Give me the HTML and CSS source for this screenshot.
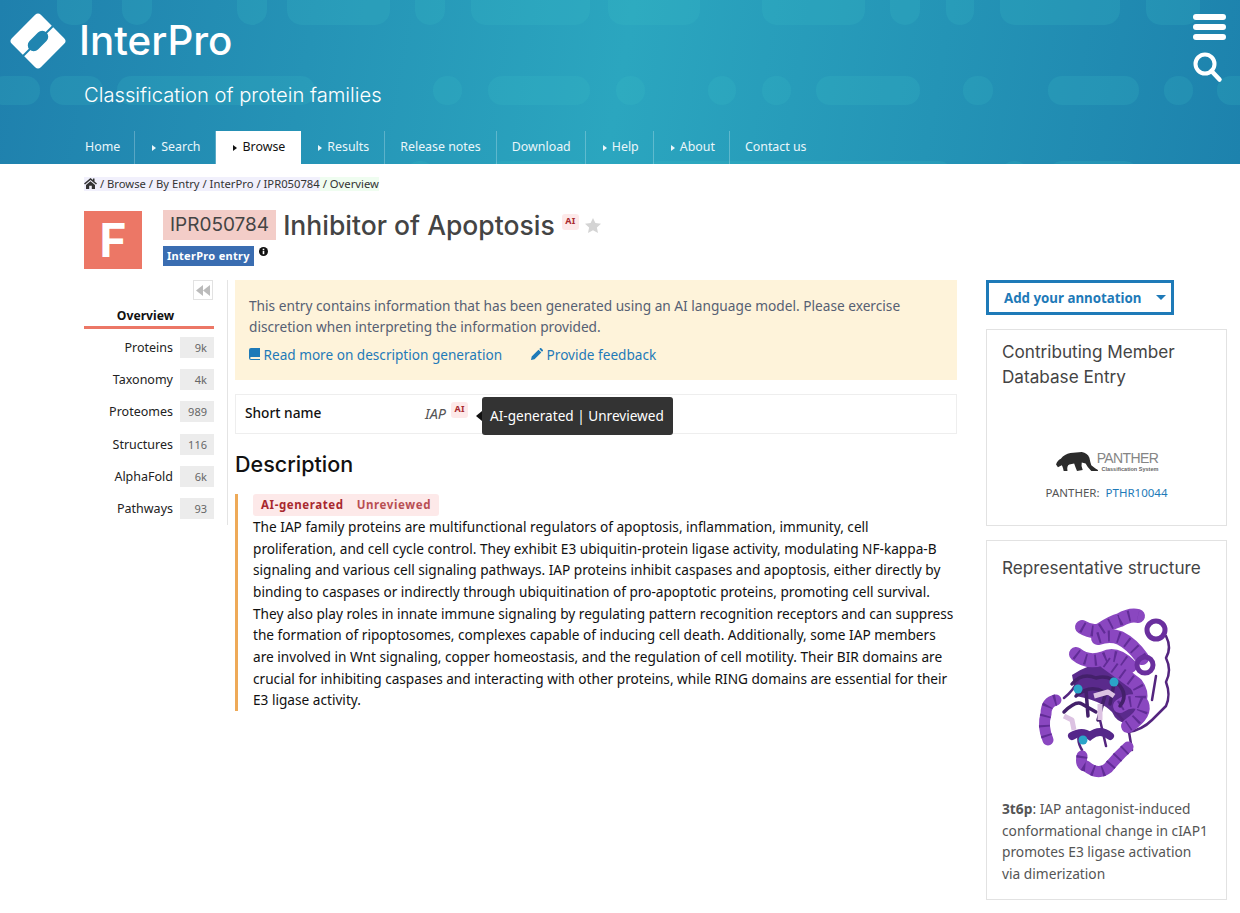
FILE: index.html
```html
<!DOCTYPE html>
<html lang="en">
<head>
    <meta charset="UTF-8">
    <title>InterPro</title>
    <link rel="stylesheet" href="styles.css">
</head>
<body>
    <header class="masthead">
        <svg class="pills" width="1240" height="164" viewBox="0 0 1240 164">
            <g class="pill-row">
                <rect x="57" y="-16" width="35" height="41" rx="15"/>
                <rect x="122" y="-16" width="30" height="41" rx="15"/>
                <rect x="237" y="-16" width="30" height="41" rx="15"/>
                <rect x="287" y="-16" width="103" height="41" rx="15"/>
                <rect x="415" y="-16" width="30" height="41" rx="15"/>
                <rect x="471" y="-16" width="119" height="41" rx="15"/>
                <rect x="608" y="-16" width="92" height="41" rx="15"/>
                <rect x="762" y="-16" width="103" height="41" rx="15"/>
                <rect x="890" y="-16" width="30" height="41" rx="15"/>
                <rect x="946" y="-16" width="28" height="41" rx="14"/>
                <rect x="1000" y="-16" width="120" height="41" rx="15"/>
                <rect x="1146" y="-16" width="54" height="41" rx="15"/>
                <rect x="-10" y="76" width="50" height="29" rx="14"/>
                <rect x="50" y="76" width="53" height="29" rx="14"/>
                <rect x="117" y="76" width="198" height="29" rx="14"/>
                <rect x="433" y="76" width="29" height="29" rx="14"/>
                <rect x="488" y="76" width="102" height="29" rx="14"/>
                <rect x="616" y="76" width="29" height="29" rx="14"/>
                <rect x="708" y="76" width="28" height="29" rx="14"/>
                <rect x="762" y="76" width="29" height="29" rx="14"/>
                <rect x="816" y="76" width="104" height="29" rx="14"/>
                <rect x="963" y="76" width="30" height="29" rx="14"/>
                <rect x="1048" y="76" width="91" height="29" rx="14"/>
                <rect x="1164" y="76" width="29" height="29" rx="14"/>
                <rect x="1217" y="76" width="40" height="29" rx="14"/>
                <rect x="405" y="161" width="30" height="29" rx="14"/>
                <rect x="488" y="161" width="102" height="29" rx="14"/>
                <rect x="645" y="161" width="308" height="29" rx="14"/>
                <rect x="1000" y="161" width="29" height="29" rx="14"/>
                <rect x="1048" y="161" width="91" height="29" rx="14"/>
            </g>
        </svg>
        <div class="brand">
            <svg class="logo" width="56" height="56" viewBox="0 0 56 56">
                <rect x="7.500" y="7.500" width="41" height="41" rx="4" fill="#fff" transform="rotate(45 28 28)"/>
                <path d="M12 44 L44 12" stroke="#2085b0" stroke-width="2"/>
                <rect x="16" y="22" width="24" height="12" rx="6" fill="#2085b0" transform="rotate(-45 28 28)"/>
            </svg>
            <span class="brand-name">InterPro</span>
        </div>
        <p class="tagline">Classification of protein families</p>
        <div class="header-icons">
            <div class="burger"><span></span><span></span><span></span></div>
            <svg width="30" height="31" viewBox="0 0 30 31">
                <circle cx="12" cy="12" r="9.500" fill="none" stroke="#fff" stroke-width="4"/>
                <path d="M18.500 19 L26.500 27.500" stroke="#fff" stroke-width="4.500" stroke-linecap="round"/>
            </svg>
        </div>
        <nav class="main-nav">
            <a class="nav-item" href="#">Home</a>
            <a class="nav-item sub wide" href="#">Search</a>
            <a class="nav-item sub wide active" href="#">Browse</a>
            <a class="nav-item sub wide" href="#">Results</a>
            <a class="nav-item wide" href="#">Release notes</a>
            <a class="nav-item" href="#">Download</a>
            <a class="nav-item sub" href="#">Help</a>
            <a class="nav-item sub" href="#">About</a>
            <a class="nav-item last" href="#">Contact us</a>
        </nav>
    </header>

    <div class="page">
        <div class="breadcrumb">
            <span class="crumb-path"><svg class="home-icon" width="13" height="11" viewBox="0 0 13 11"><path d="M6.500 0 L0 5.500 L1 6.500 L6.500 2 L12 6.500 L13 5.500 L10.500 3.400 V0.600 H9 V2.100 Z M2 7 V11 H5.200 V7.800 H7.800 V11 H11 V7 L6.500 3.200 Z" fill="#333"/></svg> / Browse / By Entry / InterPro / IPR050784</span><span class="crumb-last"> / Overview</span>
        </div>

        <div class="entry-head">
            <div class="type-box">F</div>
            <div class="entry-title">
                <h1>
                    <span class="accession">IPR050784</span>
                    <span>Inhibitor of Apoptosis</span>
                    <span class="ai-tag">AI</span>
                    <svg class="star" width="16" height="15" viewBox="0 0 16 15"><path d="M8 0 L10.400 5 L16 5.700 L11.900 9.500 L13 15 L8 12.300 L3 15 L4.100 9.500 L0 5.700 L5.600 5 Z" fill="#d4d4d4"/></svg>
                </h1>
                <div class="entry-type">
                    <span class="db-label">InterPro entry</span>
                    <svg class="info" width="9" height="9" viewBox="0 0 9 9"><circle cx="4.500" cy="4.500" r="4.500" fill="#111"/><rect x="3.700" y="3.800" width="1.600" height="3.400" fill="#fff"/><rect x="3.700" y="1.700" width="1.600" height="1.400" fill="#fff"/></svg>
                </div>
            </div>
        </div>

        <div class="columns">
            <aside class="side-menu">
                <div class="collapse-row">
                    <span class="collapse-btn"><svg width="14" height="11" viewBox="0 0 14 11"><path d="M7 0 V11 L0 5.500 Z M14 0 V11 L7 5.500 Z" fill="#bbb"/></svg></span>
                </div>
                <div class="menu-current">Overview</div>
                <ul class="menu-list">
                    <li><span>Proteins</span><b>9k</b></li>
                    <li><span>Taxonomy</span><b>4k</b></li>
                    <li><span>Proteomes</span><b>989</b></li>
                    <li><span>Structures</span><b>116</b></li>
                    <li><span>AlphaFold</span><b>6k</b></li>
                    <li><span>Pathways</span><b>93</b></li>
                </ul>
            </aside>

            <main class="content">
                <div class="notice">
                    <p>This entry contains information that has been generated using an AI language model. Please exercise<br>discretion when interpreting the information provided.</p>
                    <div class="notice-links">
                        <a href="#"><svg width="11" height="12" viewBox="0 0 11 12"><path d="M2 0 H11 V9 H2 Q1.200 9 1.200 10 T2 11 H11 V12 H2 Q0 12 0 10 V2 Q0 0 2 0 Z" fill="#1e7ab8"/></svg> Read more on description generation</a>
                        <a href="#"><svg width="12" height="12" viewBox="0 0 12 12"><path d="M0 12 L0.700 8.500 L7.500 1.700 L10.300 4.500 L3.500 11.300 Z M8.300 1 L9.300 0 Q9.800 -0.200 10.300 0.300 L11.700 1.700 Q12.200 2.200 12 2.700 L11 3.700 Z" fill="#1e7ab8"/></svg> Provide feedback</a>
                    </div>
                </div>

                <div class="short-name">
                    <strong>Short name</strong>
                    <em>IAP</em><span class="ai-tag">AI</span>
                    <div class="tooltip">AI-generated | Unreviewed</div>
                </div>

                <h2>Description</h2>
                <div class="description">
                    <div class="ai-banner"><b>AI-generated</b><i>Unreviewed</i></div>
                    <p>The IAP family proteins are multifunctional regulators of apoptosis, inflammation, immunity, cell<br>
                    proliferation, and cell cycle control. They exhibit E3 ubiquitin-protein ligase activity, modulating NF-kappa-B<br>
                    signaling and various cell signaling pathways. IAP proteins inhibit caspases and apoptosis, either directly by<br>
                    binding to caspases or indirectly through ubiquitination of pro-apoptotic proteins, promoting cell survival.<br>
                    They also play roles in innate immune signaling by regulating pattern recognition receptors and can suppress<br>
                    the formation of ripoptosomes, complexes capable of inducing cell death. Additionally, some IAP members<br>
                    are involved in Wnt signaling, copper homeostasis, and the regulation of cell motility. Their BIR domains are<br>
                    crucial for inhibiting caspases and interacting with other proteins, while RING domains are essential for their<br>
                    E3 ligase activity.</p>
                </div>
            </main>

            <aside class="right-col">
                <div class="annotate-btn"><span>Add your annotation</span><i class="caret"></i></div>
                <section class="panel member-panel">
                    <h3>Contributing Member<br>Database Entry</h3>
                    <div class="panther-logo">
                        <svg width="44" height="20" viewBox="0 0 44 21"><path d="M0 13 Q1 9 5 7 Q9 2 15 1 L27 0 Q33 1 35 6 Q36 11 37 14 L41 17 L44 19 L44 20 L37 20 Q33 16 31 12 L27 11 Q26 15 28 19 L22 20 Q20 15 19 12 L14 13 Q11 14 12 20 L8 20 Q7 15 6 14 L2 16 Z" fill="#2b2b2b"/></svg>
                        <div class="panther-word"><span>PANTHER</span><small>Classification System</small></div>
                    </div>
                    <p class="member-id">PANTHER: <a href="#">PTHR10044</a></p>
                </section>
                <section class="panel structure-panel">
                    <h3>Representative structure</h3>
                    <svg class="protein" width="170" height="190" viewBox="0 0 170 190">
                        <path class="core" d="M52 75 Q80 55 112 72 Q128 92 120 118 Q100 130 92 112 Q80 100 56 96 Z"/>
                        <g class="chain">
                            <path d="M146 36 Q152 48 146 58 Q152 70 146 82 Q151 95 146 106 L132 120 Q122 130 108 132"/>
                            <path d="M112 150 L108 126 L96 112 M100 156 L112 146"/>
                            <path d="M62 150 Q56 140 60 132 M44 98 Q54 90 58 80 M80 120 L86 146 M64 165 Q72 176 84 174"/>
                            <path d="M136 76 L132 100 M88 40 Q84 30 78 26"/>
                        </g>
                        <g class="helix">
                            <path d="M62 27 Q72 33 80 30 Q92 22 100 20 Q110 14 118 16"/>
                            <path d="M78 38 Q90 34 100 38 Q112 44 122 58"/>
                            <path d="M56 54 Q68 64 84 58 Q96 52 110 66"/>
                            <path d="M86 62 Q100 72 116 84 Q122 92 120 100"/>
                            <path d="M100 106 Q112 98 122 104 Q126 114 108 126"/>
                        </g>
                        <g class="helix slim">
                            <path d="M36 100 Q26 102 26 114 Q22 126 28 140"/>
                            <path d="M62 156 Q60 166 66 166 Q78 176 88 168 Q98 156 108 147"/>
                        </g>
                        <g class="helix-ribs">
                            <path d="M62 27 Q72 33 80 30 Q92 22 100 20 Q110 14 118 16"/>
                            <path d="M78 38 Q90 34 100 38 Q112 44 122 58"/>
                            <path d="M56 54 Q68 64 84 58 Q96 52 110 66"/>
                            <path d="M86 62 Q100 72 116 84 Q122 92 120 100"/>
                            <path d="M100 106 Q112 98 122 104 Q126 114 108 126"/>
                            <path d="M36 100 Q26 102 26 114 Q22 126 28 140"/>
                            <path d="M62 156 Q60 166 66 166 Q78 176 88 168 Q98 156 108 147"/>
                        </g>
                        <g class="ring">
                            <circle cx="136" cy="30" r="9"/>
                            <circle cx="125" cy="65" r="8"/>
                        </g>
                        <g class="tangle">
                            <path d="M52 84 Q62 72 76 78 Q90 74 100 86 Q108 96 100 106 M56 96 Q70 84 84 92 M44 112 Q56 100 62 104 L76 112 M66 90 L68 116 M86 92 L78 120 M94 84 L90 104"/>
                            <path d="M52 136 Q62 130 70 136 Q80 128 90 136" class="tangle-thick"/>
                        </g>
                        <g class="sheet">
                            <path d="M44 116 L52 120 L54 130"/>
                            <path d="M74 96 L88 92 L94 96"/>
                            <path d="M80 104 L80 120"/>
                        </g>
                        <circle class="ion" cx="58" cy="89" r="4.500"/>
                        <circle class="ion" cx="94" cy="82" r="4.500"/>
                        <circle class="ion" cx="63" cy="140" r="4.500"/>
                    </svg>
                    <p class="structure-note"><b>3t6p</b>: IAP antagonist-induced<br>conformational change in cIAP1<br>promotes E3 ligase activation<br>via dimerization</p>
                </section>
            </aside>
        </div>
    </div>
</body>
</html>
```

FILE: styles.css
```css
* {
    box-sizing: border-box;
}

body {
    margin: 0;
    background-color: #fff;
    color: #111;
    font-family: "Noto Sans", Roboto, sans-serif;
    font-size: 14px;
}

.masthead {
    position: relative;
    height: 164px;
    background: linear-gradient(100deg, #1f80ad 0%, #2ba6bf 50%, #1d82ad 100%);
    overflow: hidden;
    color: #fff;
}

.pills {
    position: absolute;
    left: 0;
    top: 0;
}

.pill-row {
    fill: #3cc4c8;
    fill-opacity: 0.18;
}

.brand {
    position: relative;
    display: flex;
    align-items: center;
    height: 81px;
    padding-left: 10px;
}

.brand-name {
    margin-left: 13px;
    font-family: Inter, sans-serif;
    font-size: 40.300px;
    font-weight: 500;
}

.tagline {
    position: relative;
    margin: 2px 0 0 84px;
    font-family: Inter, sans-serif;
    font-size: 20.200px;
    font-weight: 300;
    line-height: 24px;
}

.header-icons {
    position: absolute;
    top: 14px;
    right: 14px;
    width: 33px;
}

.burger span {
    display: block;
    height: 6px;
    margin-bottom: 4px;
    border-radius: 3px;
    background-color: #fff;
}

.header-icons svg {
    display: block;
    margin-top: 12px;
}

.main-nav {
    position: absolute;
    left: 70px;
    bottom: 0;
    display: flex;
    height: 33px;
}

.nav-item {
    display: block;
    padding: 0 14px 0 15px;
    border-right: 1px solid rgba(255, 255, 255, 0.25);
    color: #eaf6fa;
    font-size: 12.400px;
    line-height: 31px;
    text-decoration: none;
}

.nav-item.wide {
    padding-right: 15px;
}

.nav-item.sub {
    padding-left: 17px;
}

.nav-item.sub::before {
    content: "";
    display: inline-block;
    margin-right: 5px;
    border-left: 4px solid currentColor;
    border-top: 3.500px solid transparent;
    border-bottom: 3.500px solid transparent;
}

.nav-item.active {
    background-color: #fff;
    border-right-color: #fff;
    color: #111;
}

.nav-item.last {
    border-right: none;
}

.page {
    padding: 0 13px 0 84px;
}

.breadcrumb {
    padding-top: 13px;
    height: 40px;
    font-size: 11.250px;
    line-height: 14px;
    color: #333;
}

.crumb-path {
    display: inline-block;
    background-color: #f1f0fc;
}

.crumb-last {
    display: inline-block;
    background-color: #effdf0;
    white-space: pre;
}

.home-icon {
    vertical-align: -1px;
}

.entry-head {
    display: flex;
    margin-top: 7px;
}

.type-box {
    width: 58px;
    height: 58px;
    background-color: #ec7766;
    color: #fff;
    font-family: Inter, sans-serif;
    font-size: 46px;
    font-weight: 700;
    line-height: 58px;
    text-align: center;
}

.entry-title {
    margin: -1px 0 0 21px;
}

.entry-title h1 {
    display: flex;
    align-items: center;
    height: 30px;
    margin: 0;
    font-family: Inter, sans-serif;
    font-size: 26.500px;
    font-weight: 500;
    line-height: 30px;
    color: #444;
}

.accession {
    height: 30px;
    margin-right: 7px;
    padding: 0 7px;
    background-color: #f3cdc8;
    font-size: 19px;
    font-weight: 400;
}

.ai-tag {
    display: inline-block;
    height: 16px;
    padding: 0 3.500px;
    border-radius: 3px;
    background-color: #fde9e9;
    color: #a8282e;
    font-family: "Noto Sans", sans-serif;
    font-size: 9px;
    font-weight: 700;
    line-height: 14px;
    letter-spacing: 0.300px;
}

.entry-title h1 .ai-tag {
    align-self: flex-start;
    margin: 4px 0 0 7px;
}

.star {
    align-self: flex-start;
    margin: 8px 0 0 6px;
}

.entry-type {
    display: flex;
    align-items: flex-start;
    margin-top: 6px;
}

.db-label {
    padding: 0 4px;
    background-color: #3a6db1;
    color: #fff;
    font-size: 11px;
    font-weight: 700;
    line-height: 20px;
    letter-spacing: 0.300px;
}

.info {
    margin: 1px 0 0 5px;
}

.columns {
    display: flex;
    margin-top: 11px;
}

.side-menu {
    width: 144px;
    height: 245px;
    padding-right: 13px;
    border-right: 1px solid #e4e4e4;
}

.collapse-row {
    display: flex;
    justify-content: flex-end;
    height: 26px;
    margin-right: 1px;
}

.collapse-btn {
    display: flex;
    align-items: center;
    justify-content: center;
    width: 20px;
    height: 20px;
    border: 1px solid #e2e2e2;
}

.menu-current {
    height: 23px;
    padding-right: 7px;
    border-bottom: 3px solid #ec7766;
    font-size: 12.200px;
    font-weight: 700;
    line-height: 19px;
    text-align: center;
}

.menu-list {
    margin: 8px 0 0;
    padding: 0;
    list-style: none;
}

.menu-list li {
    display: flex;
    align-items: center;
    justify-content: flex-end;
    height: 21px;
    margin-bottom: 11.200px;
    font-size: 12.500px;
    color: #222;
}

.menu-list b {
    min-width: 34px;
    height: 21px;
    margin-left: 7px;
    padding: 0 7px;
    background-color: #ececec;
    color: #666;
    font-size: 11px;
    font-weight: 400;
    line-height: 21px;
    text-align: right;
}

.content {
    width: 722px;
    margin-left: 7px;
}

.notice {
    height: 100px;
    padding: 15px 14px;
    background-color: #fef3da;
    color: #566073;
    font-size: 13.700px;
    line-height: 21px;
}

.notice p {
    margin: 0;
}

.notice-links {
    display: flex;
    gap: 29px;
    margin-top: 7px;
}

.notice-links a {
    color: #1e7ab8;
    font-size: 13.600px;
    text-decoration: none;
}

.short-name {
    position: relative;
    display: flex;
    align-items: center;
    height: 40px;
    margin-top: 14px;
    padding: 0 0 3px 9px;
    border: 1px solid #eee;
    font-size: 13.700px;
}

.short-name strong {
    width: 180px;
    font-weight: 500;
}

.short-name em {
    color: #555;
    font-size: 14.500px;
}

.short-name .ai-tag {
    margin: -5px 0 0 5px;
}

.tooltip {
    position: absolute;
    left: 246px;
    top: 2px;
    padding: 0 9px 0 8px;
    border-radius: 3px;
    background-color: #333;
    color: #fff;
    font-size: 13.600px;
    line-height: 38px;
    white-space: nowrap;
}

.tooltip::before {
    content: "";
    position: absolute;
    left: -6px;
    top: 14px;
    border-right: 6px solid #111;
    border-top: 5px solid transparent;
    border-bottom: 5px solid transparent;
}

h2 {
    margin: 18px 0 17px;
    font-family: Inter, sans-serif;
    font-size: 21.500px;
    font-weight: 500;
    line-height: 25px;
}

.description {
    padding-left: 15px;
    border-left: 3px solid #eeaa58;
}

.ai-banner {
    display: block;
    width: fit-content;
    height: 22px;
    padding: 0 8px;
    border-radius: 3px;
    background-color: #fde9e9;
    color: #a8282e;
    font-size: 11.500px;
    line-height: 22px;
    letter-spacing: 0.600px;
}

.ai-banner i {
    margin-left: 13px;
    font-style: normal;
    font-weight: 700;
    opacity: 0.8;
}

.description p {
    margin: 0;
    font-size: 13.650px;
    line-height: 21.650px;
    white-space: nowrap;
}

.right-col {
    width: 241px;
    margin-left: 29px;
}

.annotate-btn {
    display: flex;
    align-items: center;
    justify-content: space-between;
    width: 188px;
    height: 35px;
    padding: 0 5px 0 15px;
    border: 3px solid #1e7ab8;
    color: #1e7ab8;
    font-weight: 700;
    font-size: 13.300px;
}

.caret {
    border-top: 5px solid #1e7ab8;
    border-left: 5px solid transparent;
    border-right: 5px solid transparent;
}

.panel {
    margin-top: 14px;
    padding: 9px 15px;
    border: 1px solid #e2e2e2;
}

.panel h3 {
    margin: 0;
    font-family: Inter, sans-serif;
    font-size: 17.150px;
    font-weight: 400;
    line-height: 25px;
    color: #444;
}

.member-panel {
    height: 197px;
}

.panther-logo {
    display: flex;
    justify-content: center;
    align-items: flex-end;
    margin-top: 62px;
}

.panther-word {
    margin-left: -2px;
    color: #858585;
    font-family: "Liberation Sans", sans-serif;
    font-size: 14px;
    letter-spacing: -0.600px;
    line-height: 15px;
}

.panther-word span {
    display: block;
}

.panther-word small {
    display: block;
    color: #666;
    font-size: 5.500px;
    font-weight: 700;
    letter-spacing: 0;
    line-height: 6px;
    text-align: right;
    white-space: nowrap;
}

.member-id {
    margin: 14px 0 0;
    color: #555;
    font-size: 11.500px;
    line-height: 14px;
    text-align: center;
}

.member-id a {
    margin-left: 3px;
    color: #1e7ab8;
    text-decoration: none;
}

.structure-panel {
    height: 360px;
    padding-top: 14px;
}

.protein {
    display: block;
    margin: 20px 0 0 18px;
}

.core {
    fill: #5a2a8c;
}

.chain path {
    fill: none;
    stroke: #54257f;
    stroke-width: 2.500;
    stroke-linecap: round;
    stroke-linejoin: round;
}

.helix path {
    fill: none;
    stroke: #8a47c0;
    stroke-width: 14;
    stroke-linecap: round;
    stroke-linejoin: round;
}

.helix.slim path {
    stroke-width: 11;
}

.helix-ribs path {
    fill: none;
    stroke: #612c96;
    stroke-width: 11;
    stroke-dasharray: 2 8;
}

.ring circle {
    fill: none;
    stroke: #6a2f9e;
    stroke-width: 5;
}

.tangle path {
    fill: none;
    stroke: #43206a;
    stroke-width: 3.500;
    stroke-linecap: round;
}

.tangle path.tangle-thick {
    stroke: #55278a;
    stroke-width: 8;
}

.sheet path {
    fill: none;
    stroke: #dcc2e2;
    stroke-width: 5;
    stroke-linejoin: round;
}

.ion {
    fill: #2ba4c8;
}

.structure-note {
    margin: 8px 0 0;
    color: #555;
    font-size: 13.750px;
    line-height: 21.700px;
    white-space: nowrap;
}
```
